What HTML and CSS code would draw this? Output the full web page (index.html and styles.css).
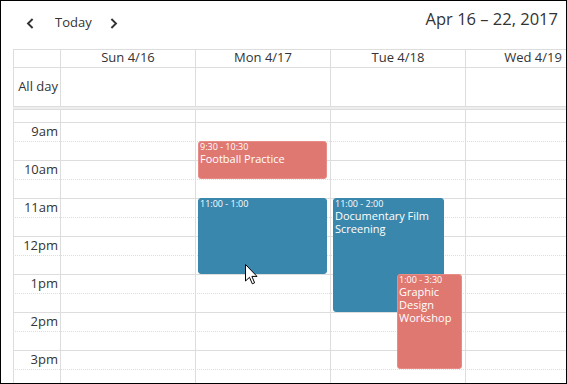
FILE: index.html
```html
<!DOCTYPE html>
<html lang="en">
<head>
<meta charset="utf-8">
<title>Week calendar</title>
<link rel="stylesheet" href="styles.css">
</head>
<body>
<div class="frame">
  <div class="toolbar">
    <div class="nav">
      <svg class="chev" viewBox="0 0 10 18" aria-hidden="true"><polyline points="7.6,6 3,10.5 7.6,15" fill="none" stroke="#333" stroke-width="1.9"/></svg>
      <span class="today">Today</span>
      <svg class="chev" viewBox="0 0 10 18" aria-hidden="true"><polyline points="2.4,6 7,10.5 2.4,15" fill="none" stroke="#333" stroke-width="1.9"/></svg>
    </div>
    <h2 class="title">Apr 16 – 22, 2017</h2>
  </div>
  <div class="cal">
    <div class="row head">
      <div class="cell"></div>
      <div class="cell">Sun 4/16</div>
      <div class="cell">Mon 4/17</div>
      <div class="cell">Tue 4/18</div>
      <div class="cell">Wed 4/19</div>
    </div>
    <div class="row allday">
      <div class="cell allday-label">All day</div>
      <div class="cell"></div>
      <div class="cell"></div>
      <div class="cell"></div>
      <div class="cell"></div>
    </div>
    <div class="divider"></div>
    <div class="timegrid">
      <div class="tg-inner">
        <div class="slats">
          <div class="slat minor"><div class="slat-axis"></div></div>
          <div class="slat"><div class="slat-axis">9am</div></div>
          <div class="slat minor"><div class="slat-axis"></div></div>
          <div class="slat"><div class="slat-axis">10am</div></div>
          <div class="slat minor"><div class="slat-axis"></div></div>
          <div class="slat"><div class="slat-axis">11am</div></div>
          <div class="slat minor"><div class="slat-axis"></div></div>
          <div class="slat"><div class="slat-axis">12pm</div></div>
          <div class="slat minor"><div class="slat-axis"></div></div>
          <div class="slat"><div class="slat-axis">1pm</div></div>
          <div class="slat minor"><div class="slat-axis"></div></div>
          <div class="slat"><div class="slat-axis">2pm</div></div>
          <div class="slat minor"><div class="slat-axis"></div></div>
          <div class="slat"><div class="slat-axis">3pm</div></div>
          <div class="slat minor"><div class="slat-axis"></div></div>
        </div>
        <div class="cols">
          <div class="col"></div>
          <div class="col"></div>
          <div class="col">
            <div class="ev ev-red" style="top:38px;height:38px;left:2px;width:129px">
              <div class="ev-time">9:30 - 10:30</div>
              <div class="ev-title">Football Practice</div>
            </div>
            <div class="ev ev-blue" style="top:95px;height:76px;left:2px;width:129px">
              <div class="ev-time">11:00 - 1:00</div>
            </div>
          </div>
          <div class="col">
            <div class="ev ev-blue" style="top:95px;height:114px;left:2px;width:111px">
              <div class="ev-time">11:00 - 2:00</div>
              <div class="ev-title">Documentary Film Screening</div>
            </div>
            <div class="ev ev-red" style="top:171px;height:95px;left:66px;width:65px">
              <div class="ev-time">1:00 - 3:30</div>
              <div class="ev-title">Graphic Design Workshop</div>
            </div>
          </div>
          <div class="col"></div>
        </div>
      </div>
    </div>
  </div>
  <svg class="cursor" width="13" height="21" viewBox="0 0 13 21" aria-hidden="true"><path d="M0.5 0.5 V17 L4.5 13.3 L7.3 19.8 L9.6 18.8 L6.9 12.4 H12 Z" fill="#fff" stroke="#000" stroke-width="1" stroke-linejoin="miter"/></svg>
</div>
</body>
</html>
```

FILE: styles.css
```css
html, body {
  margin: 0;
  padding: 0;
  background: #fff;
}
body {
  font-family: "Open Sans", "DejaVu Sans", sans-serif;
  color: #333;
}
.frame {
  position: relative;
  width: 567px;
  height: 384px;
  box-sizing: border-box;
  border: 1px solid #000;
  overflow: hidden;
  display: flex;
  flex-direction: column;
  background: #fff;
}
.toolbar {
  flex: none;
  height: 48px;
  display: flex;
  justify-content: space-between;
  align-items: flex-start;
}
.nav {
  display: flex;
  align-items: center;
  padding: 12px 0 0 24px;
  font-size: 13px;
  line-height: 18px;
}
.chev {
  display: block;
  width: 10px;
  height: 18px;
}
.today {
  margin: 0 17px 0 20px;
}
.title {
  margin: 0;
  padding: 8px 8px 0 0;
  font-size: 16.5px;
  line-height: 20px;
  font-weight: normal;
  color: #333;
}
.cal {
  flex: 1;
  min-height: 0;
  width: 587px;
  margin-left: 12px;
  display: flex;
  flex-direction: column;
}
.row {
  flex: none;
  display: grid;
  grid-template-columns: 47px repeat(4, 135px);
}
.cell {
  box-sizing: border-box;
  border-left: 1px solid #ddd;
  border-top: 1px solid #ddd;
}
.head .cell {
  height: 18px;
  text-align: center;
  font-size: 13px;
  line-height: 15px;
}
.allday .cell {
  height: 39px;
}
.allday-label {
  display: flex;
  align-items: center;
  justify-content: flex-end;
  padding: 0 2px 2px 0;
  font-size: 13px;
  line-height: 17px;
}
.divider {
  flex: none;
  height: 2px;
  border-top: 1px solid #ddd;
  border-bottom: 1px solid #ddd;
  background: #eee;
}
.timegrid {
  flex: 1;
  min-height: 0;
  overflow: hidden;
}
.tg-inner {
  position: relative;
  margin-top: -7px;
}
.slat {
  display: flex;
  height: 19px;
  box-sizing: border-box;
  border-top: 1px solid #ddd;
}
.slat.minor {
  border-top-style: dotted;
}
.slat-axis {
  width: 47px;
  box-sizing: border-box;
  padding-right: 2px;
  text-align: right;
  font-size: 13px;
  line-height: 17px;
}
.cols {
  position: absolute;
  top: 0;
  left: 0;
  right: 0;
  bottom: 0;
  display: grid;
  grid-template-columns: 47px repeat(4, 135px);
}
.col {
  position: relative;
  border-left: 1px solid #ddd;
}
.ev {
  position: absolute;
  box-sizing: border-box;
  border: 1px solid;
  border-radius: 3px;
  padding: 0 1px;
  overflow: hidden;
  color: #fff;
}
.ev-time {
  font-size: 9px;
  line-height: 10px;
  white-space: nowrap;
}
.ev-title {
  font-size: 11px;
  line-height: 13px;
}
.ev-red {
  background: #e07872;
  border-color: #e88c86;
}
.ev-blue {
  background: #3a87ad;
  border-color: #3a87ad;
}
.cursor {
  position: absolute;
  left: 244px;
  top: 263px;
}
```
